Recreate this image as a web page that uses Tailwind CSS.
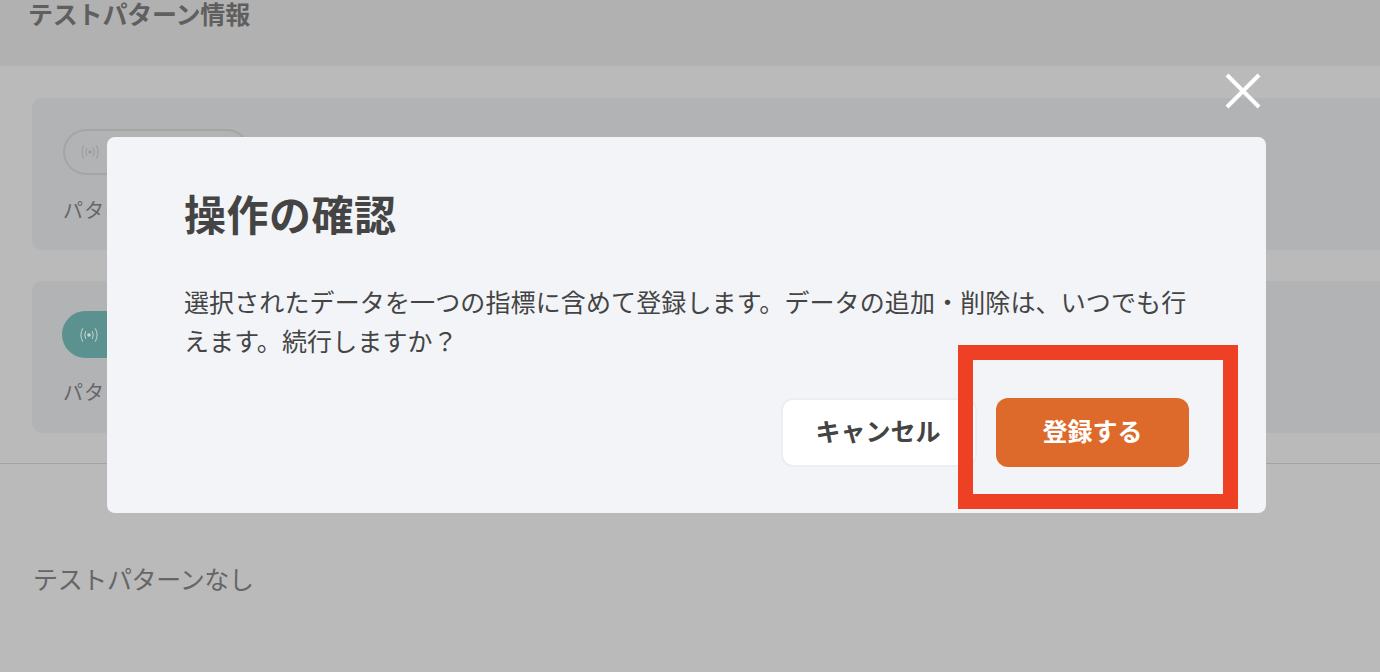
<!DOCTYPE html>
<html lang="ja">
<head>
    <meta charset="UTF-8">
    <title>操作の確認</title>
    <script src="https://cdn.jsdelivr.net/npm/@tailwindcss/browser@4"></script>
</head>
<body class="relative h-[672px] w-[1380px] overflow-hidden bg-[#bababa] font-['Inter','Noto_Sans_CJK_JP',sans-serif] text-[#444]">

    <!-- Page behind the overlay -->
    <header class="h-[66px] bg-[#b1b1b1] px-[28px]">
        <h2 class="text-[25px] leading-[30px] font-bold tracking-[-0.2px] text-[#5f5f5f]">テストパターン情報</h2>
    </header>

    <section class="h-[398px] border-b border-[#a3a3a3] pt-[32px] pl-[32px]">
        <div class="h-[152px] rounded-l-[10px] bg-[#b2b3b5] pt-[31px] pl-[31px]">
            <div class="flex h-[46px] w-[187px] items-center rounded-full border-2 border-[#a5a5a5] pl-[15px]">
                <svg class="h-[20px] w-[20px] text-[#9a9a9a]" viewBox="0 0 20 20" fill="none" stroke="currentColor" stroke-width="1" stroke-linecap="round">
                    <circle cx="10" cy="10" r="1.8" fill="currentColor" stroke="none"/>
                    <path d="M6.6 6.4Q4.6 10 6.6 13.6M13.4 6.4Q15.4 10 13.4 13.6M3.6 3.6Q0 10 3.6 16.4M16.4 3.6Q20 10 16.4 16.4"/>
                </svg>
            </div>
            <p class="mt-[22px] text-[20px] leading-[28px] tracking-[1px] text-[#666]">パターン</p>
        </div>
        <div class="mt-[31px] h-[152px] rounded-l-[10px] bg-[#b2b3b5] pt-[30px] pl-[30px]">
            <div class="flex h-[47px] w-[187px] items-center rounded-full bg-[#5b918e] pl-[17px]">
                <svg class="h-[20px] w-[20px] text-[#c4d6d5]" viewBox="0 0 20 20" fill="none" stroke="currentColor" stroke-width="1" stroke-linecap="round">
                    <circle cx="10" cy="10" r="1.8" fill="currentColor" stroke="none"/>
                    <path d="M6.6 6.4Q4.6 10 6.6 13.6M13.4 6.4Q15.4 10 13.4 13.6M3.6 3.6Q0 10 3.6 16.4M16.4 3.6Q20 10 16.4 16.4"/>
                </svg>
            </div>
            <p class="mt-[21px] pl-[1px] text-[20px] leading-[28px] tracking-[1px] text-[#666]">パターン</p>
        </div>
    </section>

    <p class="mt-[101px] pl-[33px] text-[25px] leading-[30px] tracking-[-0.35px] text-[#666]">テストパターンなし</p>

    <!-- Close button -->
    <svg class="absolute top-[73px] left-[1225px] h-[36px] w-[36px] text-white" viewBox="0 0 36 36" fill="none" stroke="currentColor" stroke-width="4">
        <path d="M2 2 34 34M34 2 2 34"/>
    </svg>

    <!-- Modal -->
    <div class="absolute top-[137px] left-[107px] h-[376px] w-[1159px] rounded-[8px] bg-[#f2f4f8] pt-[53px] pr-[76px] pl-[77px]">
        <h1 class="text-[42px] leading-[52px] font-bold tracking-[0.5px] text-[#444]">操作の確認</h1>
        <p class="mt-[42px] text-[25px] leading-[39px] tracking-[0.12px] text-[#444]">選択されたデータを一つの指標に含めて登録します。データの追加・削除は、いつでも行えます。続行しますか？</p>
        <div class="absolute top-[261px] right-[77px] flex gap-[19px]">
            <button class="h-[69px] w-[196px] rounded-[12px] border-2 border-[#eceef1] bg-white pr-[2px] text-[25px] font-bold text-[#444]">キャンセル</button>
            <button class="h-[69px] w-[193px] rounded-[12px] bg-[#dd6a2a] text-[25px] font-bold text-white">登録する</button>
        </div>
    </div>

    <!-- Red highlight -->
    <div class="absolute top-[345px] left-[958px] h-[164px] w-[280px] border-[15px] border-[#ee4025]"></div>

</body>
</html>
